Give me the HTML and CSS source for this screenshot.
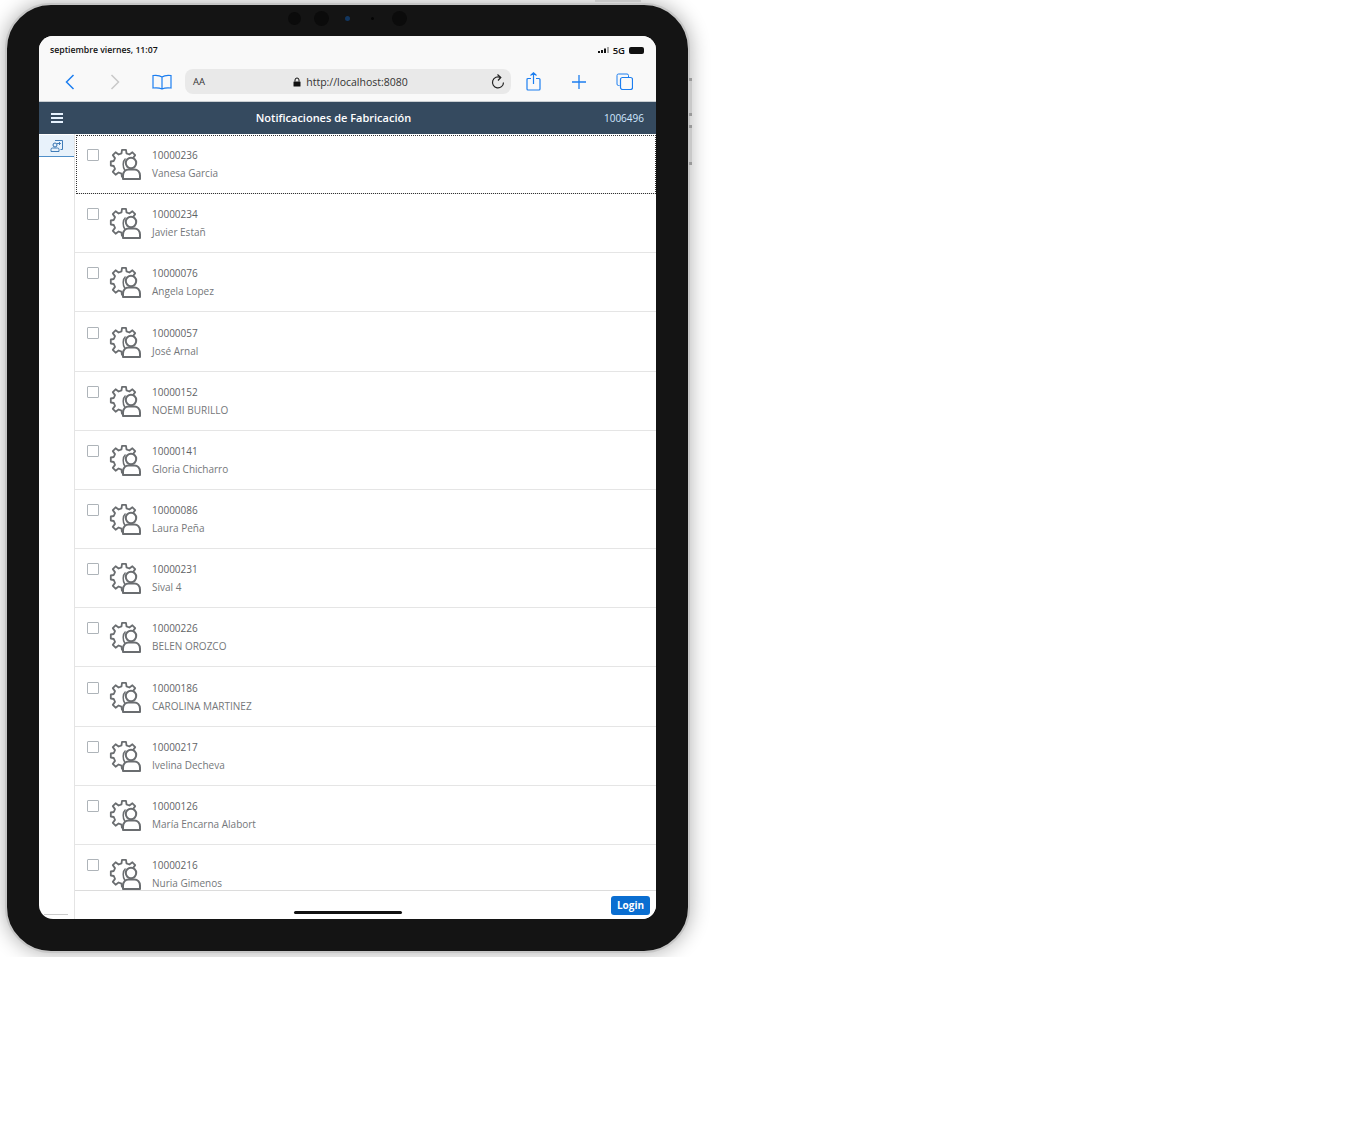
FILE: index.html
```html
<!DOCTYPE html>
<html lang="en">
<head>
    <meta charset="UTF-8">
    <title>Notificaciones de Fabricación</title>
    <link rel="stylesheet" href="styles.css">
</head>
<body>
    <svg class="defs" width="0" height="0">
        <symbol id="worker" viewBox="0 0 31 31" overflow="visible">
            <path d="M23 9.100 25.200 6.100 22.400 3.300 19.400 5.500 16.500 4.300 16 .9H12L11.500 4.300 8.600 5.500 5.600 3.300 2.800 6.100 5 9.100 3.800 12 .8 12.500V16.500L3.800 17 5 19.900 2.800 22.900 5.600 25.700 8.600 23.500 11.500 24.700 12 28.400" fill="none" stroke="#6a6d70" stroke-width="1.800" stroke-linejoin="round"/>
            <path d="M15.500 9.500C12.500 12 12.500 18.500 15 21.500" fill="none" stroke="#6a6d70" stroke-width="1.500"/>
            <circle cx="21" cy="14" r="5.200" fill="#fff" stroke="#6a6d70" stroke-width="2"/>
            <path d="M13 30V26.500C13 23 15.500 20.500 18.500 20.500H24.500C27.500 20.500 30 23 30 26.500V30Z" fill="#fff" stroke="#6a6d70" stroke-width="2" stroke-linejoin="round"/>
        </symbol>
    </svg>

    <div class="shot">
        <div class="device">
            <div class="camera">
                <span class="lens"></span>
                <span class="lens big"></span>
                <span class="lens dot"></span>
                <span class="lens tiny"></span>
                <span class="lens big"></span>
            </div>
            <i class="top-btn"></i>
            <i class="side-btn upper"></i>
            <i class="side-btn lower"></i>

            <div class="screen">
                <div class="safari">
                    <div class="status">
                        <span>septiembre viernes, 11:07</span>
                        <div class="status-right">
                            <svg width="11" height="6" viewBox="0 0 11 6"><path d="M0 4h2v2H0zM3 3h2v3H3zM6 1.500h2V6H6z" fill="#111"/><path d="M9 0h2v6H9z" fill="#aaa"/></svg>
                            <span class="net">5G</span>
                            <span class="battery"></span>
                        </div>
                    </div>
                    <div class="toolbar">
                        <svg class="tb-icon back" width="12" height="18" viewBox="0 0 12 18"><path d="M9.500 2 2.500 9 9.500 16" fill="none" stroke="#1c7ef0" stroke-width="1.500"/></svg>
                        <svg class="tb-icon forward" width="12" height="18" viewBox="0 0 12 18"><path d="M2.500 2 9.500 9 2.500 16" fill="none" stroke="#c9c9c9" stroke-width="1.500"/></svg>
                        <svg class="tb-icon book" width="20" height="16" viewBox="0 0 20 16"><path d="M10 3C8 1.500 5 1 1 1.500V14C5 13.500 8 14 10 15 12 14 15 13.500 19 14V1.500C15 1 12 1.500 10 3ZM10 3V15" fill="none" stroke="#1c7ef0" stroke-width="1.200"/></svg>
                        <div class="url">
                            <span class="aa">AA</span>
                            <div class="address">
                                <svg width="8" height="10" viewBox="0 0 8 10"><path d="M1 4.500h6a.5.5 0 0 1 .5.5v4a.5.5 0 0 1-.5.5H1A.5.5 0 0 1 .5 9V5A.5.5 0 0 1 1 4.500Z" fill="#111"/><path d="M2 4.500V3a2 2 0 0 1 4 0v1.500" fill="none" stroke="#111" stroke-width="1"/></svg>
                                <span>http://localhost:8080</span>
                            </div>
                            <svg class="reload" width="14" height="16" viewBox="0 0 14 16"><path d="M9.500 3.500A5.500 5.500 0 1 0 12.500 8.500" fill="none" stroke="#222" stroke-width="1.200"/><path d="M6.500 .5 9.800 3.500 7 6.500" fill="none" stroke="#222" stroke-width="1.200"/></svg>
                        </div>
                        <svg class="tb-icon share" width="15" height="19" viewBox="0 0 15 19"><path d="M5 6.500H2A1 1 0 0 0 1 7.500V17a1 1 0 0 0 1 1H13a1 1 0 0 0 1-1V7.500a1 1 0 0 0-1-1H10M7.500 12V1M4.500 3.500 7.500 .8 10.500 3.500" fill="none" stroke="#1c7ef0" stroke-width="1.200"/></svg>
                        <svg class="tb-icon plus" width="14" height="14" viewBox="0 0 14 14"><path d="M7 0V14M0 7H14" stroke="#1c7ef0" stroke-width="1.300"/></svg>
                        <svg class="tb-icon tabs" width="17" height="17" viewBox="0 0 17 17"><path d="M3.500 12.500H2.500A1.500 1.500 0 0 1 1 11V2.500A1.500 1.500 0 0 1 2.500 1H11A1.500 1.500 0 0 1 12.500 2.500V4" fill="none" stroke="#1c7ef0" stroke-width="1"/><rect x="4.500" y="4.500" width="12" height="12" rx="2" fill="none" stroke="#1c7ef0" stroke-width="1.200"/></svg>
                    </div>
                </div>

                <header class="app-header">
                    <div class="burger"><i></i><i></i><i></i></div>
                    <div class="app-title">Notificaciones de Fabricación</div>
                    <div class="app-user">1006496</div>
                </header>

                <div class="app-body">
                    <aside class="side">
                        <div class="side-tab">
                            <svg width="13" height="12" viewBox="0 0 13 12"><circle cx="5" cy="5" r="2" fill="none" stroke="#2f6fb0"/><path d="M1 11.500V9.500A1.500 1.500 0 0 1 2.500 8H7.500A1.500 1.500 0 0 1 9 9.500V11.500ZM5 .5H12.500V9.500H10.500M7 3.500H10.500M9 2 10.500 3.500 9 5" fill="none" stroke="#2f6fb0" stroke-width=".9"/></svg>
                        </div>
                        <div class="side-foot"></div>
                    </aside>
                    <main class="content">
                        <ul class="list">
                            <li class="row focused"><span class="check"></span><svg class="worker"><use href="#worker"/></svg><div class="info"><div class="code">10000236</div><div class="name">Vanesa Garcia</div></div></li>
                            <li class="row"><span class="check"></span><svg class="worker"><use href="#worker"/></svg><div class="info"><div class="code">10000234</div><div class="name">Javier Estañ</div></div></li>
                            <li class="row"><span class="check"></span><svg class="worker"><use href="#worker"/></svg><div class="info"><div class="code">10000076</div><div class="name">Angela Lopez</div></div></li>
                            <li class="row"><span class="check"></span><svg class="worker"><use href="#worker"/></svg><div class="info"><div class="code">10000057</div><div class="name">José Arnal</div></div></li>
                            <li class="row"><span class="check"></span><svg class="worker"><use href="#worker"/></svg><div class="info"><div class="code">10000152</div><div class="name">NOEMI BURILLO</div></div></li>
                            <li class="row"><span class="check"></span><svg class="worker"><use href="#worker"/></svg><div class="info"><div class="code">10000141</div><div class="name">Gloria Chicharro</div></div></li>
                            <li class="row"><span class="check"></span><svg class="worker"><use href="#worker"/></svg><div class="info"><div class="code">10000086</div><div class="name">Laura Peña</div></div></li>
                            <li class="row"><span class="check"></span><svg class="worker"><use href="#worker"/></svg><div class="info"><div class="code">10000231</div><div class="name">Sival 4</div></div></li>
                            <li class="row"><span class="check"></span><svg class="worker"><use href="#worker"/></svg><div class="info"><div class="code">10000226</div><div class="name">BELEN OROZCO</div></div></li>
                            <li class="row"><span class="check"></span><svg class="worker"><use href="#worker"/></svg><div class="info"><div class="code">10000186</div><div class="name">CAROLINA MARTINEZ</div></div></li>
                            <li class="row"><span class="check"></span><svg class="worker"><use href="#worker"/></svg><div class="info"><div class="code">10000217</div><div class="name">Ivelina Decheva</div></div></li>
                            <li class="row"><span class="check"></span><svg class="worker"><use href="#worker"/></svg><div class="info"><div class="code">10000126</div><div class="name">María Encarna Alabort</div></div></li>
                            <li class="row"><span class="check"></span><svg class="worker"><use href="#worker"/></svg><div class="info"><div class="code">10000216</div><div class="name">Nuria Gimenos</div></div></li>
                        </ul>
                        <footer class="app-footer">
                            <button class="login">Login</button>
                        </footer>
                    </main>
                </div>
                <div class="home-bar"></div>
            </div>
        </div>
    </div>
</body>
</html>
```

FILE: styles.css
```css
* { box-sizing: border-box; }
html, body { margin: 0; padding: 0; background: #fff; }
body { font-family: "Open Sans", "Noto Sans", sans-serif; height: 1133px; overflow: hidden; }
.defs { position: absolute; }

/* device frame */
.shot { width: 712px; height: 957px; overflow: hidden; padding: 3px 0 0 5px; }
.device {
    position: relative;
    width: 685px;
    height: 950px;
    padding: 31px 32px;
    background: #141414;
    border: 2px solid #c6c6c6;
    border-radius: 46px;
    box-shadow: 0 0 20px rgba(0, 0, 0, .32);
}
.camera { position: absolute; top: 6px; left: 281px; display: flex; align-items: center; gap: 13px; }
.lens { width: 13px; height: 13px; border-radius: 50%; background: #0b0b0b; }
.lens.big { width: 15px; height: 15px; }
.lens.dot { width: 5px; height: 5px; background: #12365f; margin-left: 3px; }
.lens.tiny { width: 3px; height: 3px; background: #050505; margin: 0 5px 0 8px; }
.top-btn { position: absolute; top: -5px; left: 588px; width: 46px; height: 2px; background: #c8c8c8; }
.side-btn { position: absolute; right: -4px; width: 3px; background: #c9c9c9; border-top: 3px solid #999; border-bottom: 3px solid #999; }
.side-btn.upper { top: 73px; height: 38px; }
.side-btn.lower { top: 120px; height: 40px; }

.screen {
    position: relative;
    height: 883px;
    display: flex;
    flex-direction: column;
    background: #fff;
    border-radius: 14px;
    overflow: hidden;
}

/* safari bars */
.safari { height: 66px; background: #f9f9f9; border-bottom: 1px solid #c9ced2; flex: none; }
.status { height: 27px; padding: 1px 12px 0 11px; display: flex; justify-content: space-between; align-items: center; font-size: 8.700px; font-weight: 600; color: #111; }
.status-right { display: flex; align-items: center; gap: 4px; }
.net { font-size: 9.500px; }
.battery { width: 15px; height: 7px; background: #111; border-radius: 2px; }
.toolbar { position: relative; height: 38px; display: flex; align-items: center; padding-bottom: 1px; }
.tb-icon { flex: none; }
.back { margin-left: 25px; }
.forward { margin-left: 33px; }
.book { margin-left: 31px; }
.url { width: 326px; height: 25px; margin-left: 13px; padding: 0 6px 0 8px; display: flex; align-items: center; background: #e9e9e9; border-radius: 8px; }
.aa { font-size: 9.500px; color: #333; }
.address { flex: 1; display: flex; align-items: center; justify-content: center; gap: 5px; font-size: 10.500px; color: #333; padding-left: 5px; }
.reload { flex: none; }
.share { margin-left: 15px; }
.plus { margin-left: 31px; }
.tabs { margin-left: 30px; }

/* app header */
.app-header { height: 32px; padding: 0 12px; display: flex; align-items: center; background: #354a5f; flex: none; }
.burger { width: 12px; display: flex; flex-direction: column; gap: 2px; }
.burger i { display: block; height: 2px; background: #e6f2ff; }
.app-title { flex: 1; text-align: center; color: #fff; font-size: 11px; font-weight: 600; line-height: 32px; padding-bottom: 1px; }
.app-user { color: #d1e8ff; font-size: 10px; }

/* body */
.app-body { flex: 1; display: flex; min-height: 0; }
.side { position: relative; width: 36px; flex: none; border-right: 1px solid #e4e4e4; display: flex; flex-direction: column; justify-content: space-between; }
.side-tab { height: 22px; margin-top: 1px; background: #e8f2fb; border-bottom: 1px solid #4f8fc9; display: flex; align-items: center; justify-content: center; }
.side-foot { height: 1px; margin: 0 6px 4px 5px; background: #ccc; }

.content { flex: 1; min-width: 0; display: flex; flex-direction: column; }
.list { list-style: none; margin: .8px 0 0; padding: 0; flex: 1; overflow: hidden; }
.row { height: 59.200px; display: flex; align-items: flex-start; border-bottom: 1px solid #e5e5e5; padding: 13.200px 0 0 12px; }
.row.focused { outline: 1px dotted #333; outline-offset: -1px; margin-left: 1px; padding-left: 11px; }
.check { width: 12px; height: 12px; margin-top: 1px; background: #fff; border: 1px solid #aeb4b9; border-radius: 1px; flex: none; }
.worker { width: 31px; height: 31px; margin: 1px 0 0 11px; flex: none; overflow: visible; }
.info { margin-left: 11px; }
.code { font-size: 10px; line-height: 14px; color: #5f6366; }
.name { font-size: 10px; line-height: 14px; margin-top: 4px; color: #74777a; }

.app-footer { height: 29px; flex: none; display: flex; align-items: center; justify-content: flex-end; padding: 0 6px 0 0; background: #fff; border-top: 1px solid #dcdcdc; }
.login { width: 39px; height: 19px; padding: 0; border: 0; border-radius: 3px; background: #0a6ed1; color: #fff; font-family: "Open Sans", sans-serif; font-size: 10px; font-weight: 700; }

.home-bar { position: absolute; left: 255px; bottom: 5px; width: 108px; height: 3px; border-radius: 2px; background: #111; }
```
